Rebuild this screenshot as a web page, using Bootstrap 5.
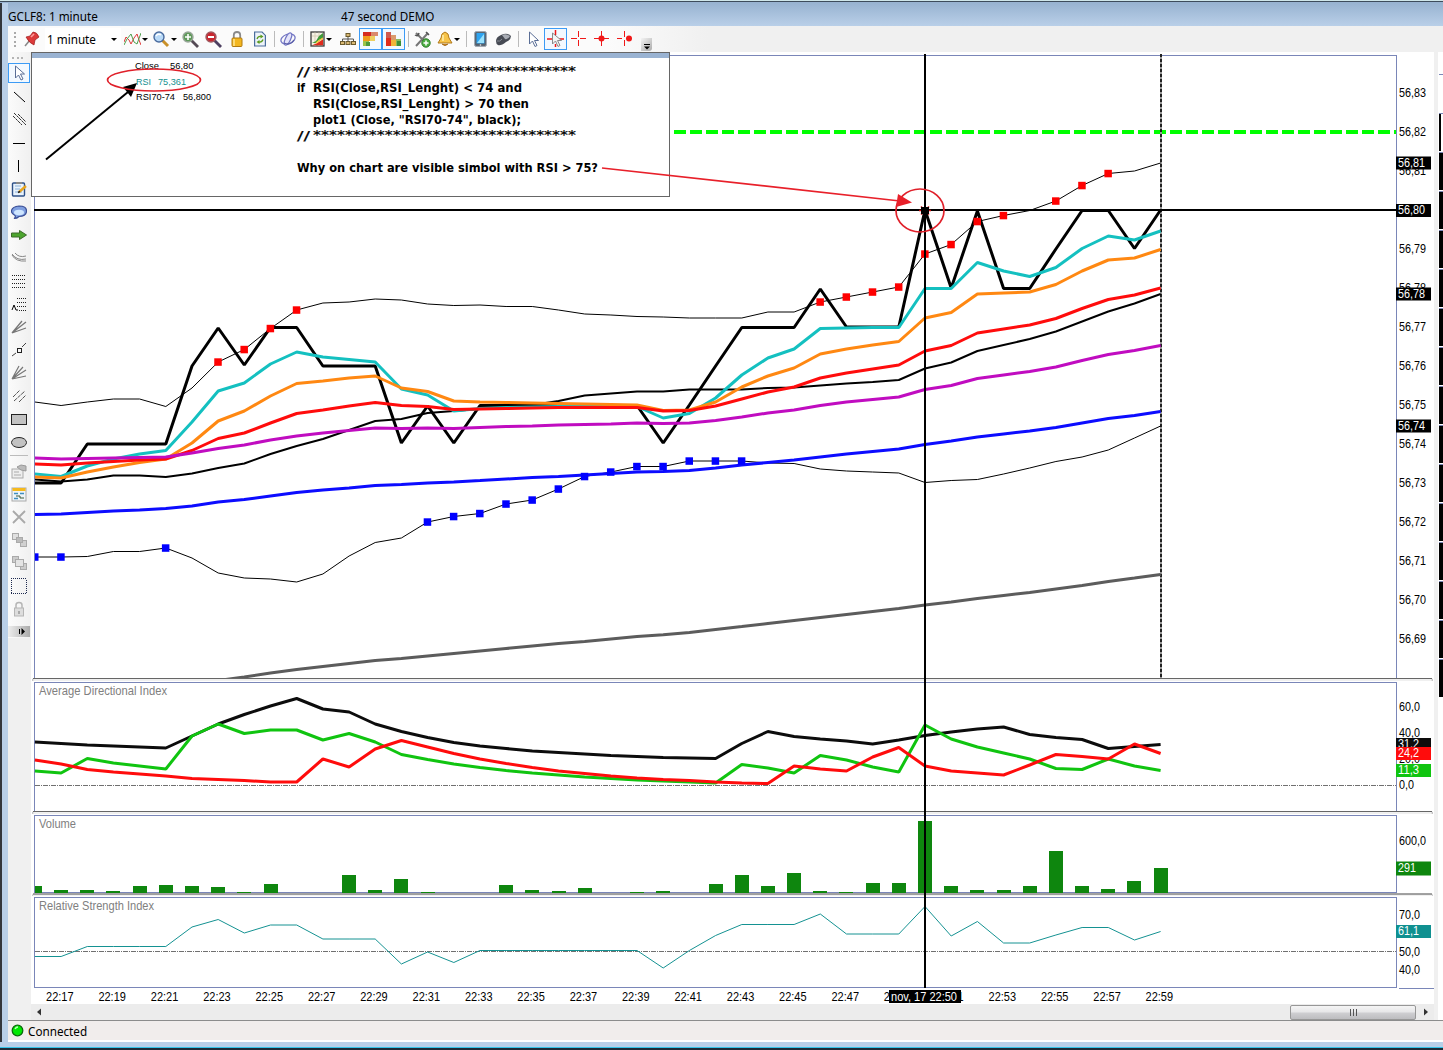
<!DOCTYPE html>
<html lang="en">
<head>
<meta charset="utf-8">
<title>GCLF8: 1 minute</title>
<link href="https://cdn.jsdelivr.net/npm/bootstrap@5.3.0/dist/css/bootstrap.min.css" rel="stylesheet">
<style>
html,body{height:100%;overflow:hidden}
body{font:12px/16px "Noto Sans","Open Sans",sans-serif;color:#000;width:1443px;height:1050px;background:#b9cfe8}
svg{display:block;flex:none}
.topedge{height:3px;flex:none;background:linear-gradient(#cfe6ea 0 1px,#3d4c5c 1px 2px,#98b3d1 2px)}
.frame-l{width:8px;flex:none;background:linear-gradient(90deg,#33363c 0 2px,#b9cfe8 2px)}
.titlebar{height:23px;flex:none;background:linear-gradient(#98b3d1,#b9cfe8);font-size:11.7px;line-height:26px}
.titlebar .t1{width:333px}
.toolbar1{height:26px;flex:none;background:linear-gradient(90deg,#fbfbfb 0 600px,#f0f0f0 700px)}
.grip-h{width:8px;height:15px;margin-left:4px;background:repeating-linear-gradient(#aaa 0 2px,transparent 2px 4.4px) 2px 0/2px 100% no-repeat}
.combo{width:76px;height:22px;background:#fff;margin-left:2px;padding-left:2px;font-size:11.7px;line-height:21px}
.ib{width:23px;height:22px;flex:none;display:flex;align-items:center;justify-content:center}
.idd{width:29px;height:22px;flex:none;display:flex;align-items:center;padding-left:3px}
.idd.wide{width:30px;padding-left:4px}
.on{border:1px solid #3c9bf5;background:#f3f9ff}
.idd::after,.combo::after{content:"";border:3px solid transparent;border-top:3px solid #000;border-bottom:0;margin-left:1px}
.sp{width:6px;height:16px;flex:none;background:linear-gradient(#bbb,#bbb) 3px 0/1px 100% no-repeat}
.ovf{width:11px;height:13px;margin:10px 0 0 5px;background:linear-gradient(135deg,#f4f4f4,#aaa);border-radius:0 0 3px 0}
.side{width:23px;flex:none;background:#f0f0f0}
.sideinner{height:586px;background:linear-gradient(90deg,#fbfbfb,#f0f0f0)}
.grip-v{height:10px;background:repeating-linear-gradient(90deg,#b5b5b5 0 2px,transparent 2px 4.5px) 4px 5px/11px 2px no-repeat}
.sideinner .ib{width:22px;height:23px}
.sideinner .on{height:20px;margin:1px 0 2px}
.hsep{height:6px;background:linear-gradient(#bbb,#bbb) 2px 2px/18px 1px no-repeat}
.charts{width:1403px;background:#fff;flex:none;position:relative}
.cross,.note{position:absolute;left:0;top:0}
.charts svg{font-family:"Liberation Sans",sans-serif}
svg.axis{font-size:12.4px}
.note .code{font:bold 12.3px "DejaVu Sans",sans-serif}
.note .stars{font-weight:normal;stroke:#000;stroke-width:.2px}
.sbar{height:16px;background:#ececec;padding:0 4px}
.thumb{width:126px;height:15px;margin-right:6px;border:1px solid #979797;border-radius:2px;background:linear-gradient(#f5f5f5 0,#e6e6e8 48%,#cfcfd2 52%,#bdbdc0)}
.statusbar{height:22px;flex:none;border-top:1px solid #8c8c8c;background:linear-gradient(#f1edec 0 19px,#fff 19px);padding-left:3px;font-size:11.7px}
.bottomedge{height:8px;flex:none;background:linear-gradient(#b9cfe8 0 5px,#35c3e8 5px 6px,#1f2a36 6px)}
.fr{fill:none;stroke:#7a86b8;shape-rendering:crispEdges}
.crisp{shape-rendering:crispEdges}
</style>
<script src="https://cdn.jsdelivr.net/npm/bootstrap@5.3.0/dist/js/bootstrap.bundle.min.js"></script>
</head>
<body class="d-flex flex-column m-0">
<div class="topedge"></div>
<div class="d-flex flex-grow-1" style="min-height:0">
<div class="frame-l"></div>
<div class="d-flex flex-column flex-grow-1">
<header class="titlebar d-flex"><span class="t1">GCLF8: 1 minute</span><span>47 second DEMO</span></header>
<nav class="toolbar1 d-flex align-items-center">
 <span class="grip-h"></span>
 <span class="ib"><svg width="16" height="16"><path d="M1 15l5-6" stroke="#888" stroke-width="1.5"/><path d="M2 6l4-1 3-4q4 0 6 5l-4 3-1 5q-5-2-8-8z" fill="#dc3a3a" stroke="#9c1c1c" stroke-width=".7"/><path d="M7 6l3-3" stroke="#ff9a9a" stroke-width="1.6"/></svg></span>
 <span class="combo d-flex align-items-center justify-content-between pe-1">1 minute</span>
 <span class="idd"><svg width="17" height="16"><path d="M0 11l2-5 3 3 2 4 3-6 3-4 2 6 2 5" fill="none" stroke="#e03a3a"/><path d="M0 14l3-6 4-5 3 8 3 2 4-11" fill="none" stroke="#4da04d"/></svg></span>
 <span class="idd"><svg width="17" height="17"><path d="M9 9l6 6" stroke="#c9912a" stroke-width="3"/><circle cx="6" cy="6" r="5" fill="#b9daf8" stroke="#4a6b9e" stroke-width="1.400"/><path d="M3 5q2-3 5-1" stroke="#fff" stroke-width="1.500" fill="none"/></svg></span>
 <span class="ib"><svg width="17" height="17"><path d="M9 9l7 7" stroke="#554a55" stroke-width="2.800"/><circle cx="6" cy="6" r="5" fill="#5f9a5a" stroke="#9aa79a" stroke-width="1.400"/><path d="M3 6h6M6 3v6" stroke="#fff" stroke-width="1.600"/></svg></span>
 <span class="ib"><svg width="17" height="17"><path d="M9 9l7 7" stroke="#4d3f60" stroke-width="2.800"/><circle cx="6" cy="6" r="5" fill="#c9262f" stroke="#a05a60" stroke-width="1.400"/><path d="M3 6h6" stroke="#fff" stroke-width="2"/></svg></span>
 <span class="ib"><svg width="12" height="16"><path d="M2.800 8V4q0-3 3.200-3t3.200 3v4" fill="none" stroke="#8a8a8a" stroke-width="1.800"/><rect x="1" y="7" width="10" height="8.500" rx="1" fill="#f3b61f" stroke="#b07a10"/><path d="M3 8v7" stroke="#ffe48a" stroke-width="1.600"/></svg></span>
 <span class="ib"><svg width="12" height="16"><path d="M.6 1h7.500l3.300 3.400V15H.6z" fill="#eef3fa" stroke="#4a6d9c" stroke-width="1.200"/><path d="M3 8q1-3 4-2.500M9 8.500q-1 3-4 2.500" stroke="#5a9b1e" stroke-width="1.300" fill="none"/><path d="M6.500 3.500l3 2-3 2zM5.500 9l-3 2 3 2z" fill="#5a9b1e"/></svg></span>
 <span class="sp"></span>
 <span class="ib"><svg width="17" height="16" fill="none" stroke="#7376c4" stroke-width="1.300"><ellipse cx="8" cy="8" rx="7.300" ry="4.800" transform="rotate(-20 8 8)"/><ellipse cx="8" cy="8" rx="2.600" ry="6.600" transform="rotate(25 8 8)" fill="#e4e4fa"/><path d="M4 12q6 3 10-3" stroke="#5a5ea8"/></svg></span>
 <span class="sp"></span>
 <span class="idd wide"><svg width="15" height="16"><rect x="1" y="1" width="13" height="14" fill="#f6f2e6" stroke="#3a3a3a" stroke-width="1.300"/><path d="M5 1.500v13M9 1.500v13M2 5h11" stroke="#d8d0b8"/><path d="M2 12l4-2 3-5 4-3v5l-4 2-3 3H2z" fill="#3f9a3a"/><path d="M2 14.300l5-2 6-4v6z" fill="#e02a1c"/><path d="M6 12l4-3 3-2" stroke="#f4c531" stroke-width="1.300" fill="none"/></svg></span>
 <span class="ib"><svg width="16" height="14" fill="#d9b873" stroke="#6b5a2c"><path d="M8 4v3M2.500 10V7h11v3M8 7v3" fill="none" stroke="#555"/><rect x="6" y="1.500" width="4" height="3"/><rect x=".5" y="9.500" width="4" height="3"/><rect x="6" y="9.500" width="4" height="3"/><rect x="11.500" y="9.500" width="4" height="3"/></svg></span>
 <span class="ib on"><svg width="17" height="16"><path d="M1 1h8v4H1z" fill="#d62b1f"/><path d="M9 1h7v4H9z" fill="#d98a6c"/><path d="M1 5h7v5H1z" fill="#f09a1c"/><path d="M8 5h5v5H8z" fill="#edd060"/><path d="M1 10h6v5H1z" fill="#9cc44a"/><path d="M4 11h4v4H4z" fill="#4d9a3d"/></svg></span>
 <span class="ib on"><svg width="17" height="16"><path d="M1 1h5v14H1z" fill="#cf5a4e"/><path d="M1 7h5v8H1z" fill="#e22e1d"/><path d="M6 4h5v11H6z" fill="#f0b53a"/><path d="M6 4h5v5H6z" fill="#d99a6e"/><path d="M11 8h5v7h-5z" fill="#8cba5a"/><path d="M12 10h4v5h-4z" fill="#3d8f3a"/></svg></span>
 <span class="sp"></span>
 <span class="ib"><svg width="17" height="17"><path d="M2 15L14 2M2 2l9 9" stroke="#777" stroke-width="2"/><path d="M1 4q3 2 4-2M12 1l3 3" stroke="#555" stroke-width="1.500" fill="none"/><circle cx="12" cy="12" r="4.200" fill="#4caf42" stroke="#2d7d2a"/><path d="M9.500 12h5M12 9.500v5" stroke="#fff" stroke-width="1.500"/></svg></span>
 <span class="idd"><svg width="16" height="16"><path d="M8 1q4 1 4 6l3 5H1l3-5q0-5 4-6z" fill="#f7c44a" stroke="#b27a1c"/><path d="M6 4v6" stroke="#fff0b0" stroke-width="1.500"/><path d="M5 13q3 3 6 0" fill="#d08a1a" stroke="#a0651a"/></svg></span>
 <span class="sp"></span>
 <span class="ib"><svg width="13" height="16"><rect x=".6" y=".6" width="11.800" height="14.800" rx="1.500" fill="#56606c" stroke="#a3abb3"/><rect x="2.500" y="2" width="8" height="10.500" fill="#2fa4f0"/><path d="M3 12l7-9v9z" fill="#9be2fc"/><circle cx="6.500" cy="14" r=".8" fill="#eee"/></svg></span>
 <span class="ib"><svg width="17" height="14"><path d="M1 9q0-4 5-6 6-3 10 1 0 4-5 6-5 4-8 3-2-1-2-4z" fill="#474b54"/><path d="M7 3q4-2 8 1-2 4-5 3z" fill="#a9adb5"/><path d="M2 9q3 1 5-2" stroke="#888d96" fill="none"/></svg></span>
 <span class="sp"></span>
 <span class="ib"><svg width="12" height="17"><path d="M2.500 1v12l3-3 2.500 5.500 2-1L7.500 9.500h4z" fill="#fff" stroke="#5a6e96"/></svg></span>
 <span class="ib on"><svg width="17" height="18"><path d="M0 9h5M12 9h5M8.500 0v5M8.500 14v3" stroke="#f01818" stroke-width="1.500"/><path d="M5.500 3v11l3-3 2.500 5.500 2-1-2.500-5h4z" fill="#f4f4f4" stroke="#8a8a8a"/></svg></span>
 <span class="ib"><svg width="16" height="16" class="crisp"><path d="M0 7.500h6M9 7.500h6M7.500 0v6M7.500 9v6" stroke="#f01818"/></svg></span>
 <span class="ib"><svg width="16" height="16"><path d="M0 7.500h15M7.500 0v15" stroke="#f01818"/><circle cx="7.500" cy="7.500" r="3" fill="#f01818"/></svg></span>
 <span class="ib"><svg width="16" height="16"><path d="M0 7.500h5M7.500 0v6M7.500 9v6M9 7.500h3" stroke="#f01818"/><circle cx="12" cy="7.500" r="3" fill="#f01818"/></svg></span>
 <span class="ovf"><svg width="11" height="13"><path d="M3 6.500h6" stroke="#000"/><path d="M3 8.500h6l-3 3z"/></svg></span>
</nav>
<div class="d-flex" style="height:968px">
<aside class="side"><div class="sideinner" id="side"></div></aside>
<main class="charts d-flex flex-column">
 <svg id="p1" class="axis" width="1403" height="629" viewBox="31 52 1403 629"></svg>
 <svg id="p2" class="axis" width="1403" height="133" viewBox="31 681 1403 133"></svg>
 <svg id="p3" class="axis" width="1403" height="82" viewBox="31 814 1403 82"></svg>
 <svg id="p4" class="axis" width="1403" height="108" viewBox="31 896 1403 108"></svg>
 <div class="sbar d-flex align-items-center"><svg width="8" height="10"><path d="M6 1.500v7L2 5z" fill="#333"/></svg><span class="thumb ms-auto d-flex align-items-center justify-content-center"><svg width="9" height="7"><path d="M1.500 0v7M4.500 0v7M7.500 0v7" stroke="#555"/></svg></span><svg width="8" height="10"><path d="M2 1.500v7L6 5z" fill="#333"/></svg></div>
 <svg class="note" width="1403" height="200" viewBox="31 52 1403 200">
  <rect x="31.500" y="52.500" width="638" height="144" fill="#fff" stroke="#666"/><path d="M32 55.500h637" stroke="#9ab3d2" stroke-width="5"/>
  <g font-size="9.800" id="legend"></g>
  <path d="M46 159.500L128 92" stroke="#000" stroke-width="2"/><path d="M137 83l-6 14-8-10z"/>
  <ellipse cx="154" cy="80" rx="46.500" ry="11" fill="none" stroke="#e0202a" stroke-width="1.700"/>
  <g class="code" id="code"></g>
 </svg>
 <svg class="cross axis" width="1403" height="952" viewBox="31 52 1403 952" id="cross"></svg>
</main>
<svg width="9" height="968" viewBox="1434 52 9 968" class="crisp" id="edge"></svg>
</div>
<footer class="statusbar d-flex align-items-center"><svg width="13" height="13" style="margin-right:4px;margin-top:-3px"><circle cx="6.500" cy="6.500" r="5.300" fill="#00e800" stroke="#0a6b0a" stroke-width="1.300"/><path d="M4 5q1-2 3-2" stroke="#baffba" stroke-width="1.300" fill="none"/></svg><span style="margin-top:-2px">Connected</span></footer>
</div>
</div>
<div class="bottomedge"></div>
<script>
// drawing tools of the left palette
const ic={
 cur:'<path d="M4.500 1v12l3-3 2.500 5 2-1-2.500-5h4z" fill="#fff" stroke="#5a6e96"/>',
 l1:'<path d="M3 3l11 10" stroke="#000"/>',
 l2:'<path d="M2 4l9 9M7 2l8 8M3 1l12 12" stroke="#333" stroke-dasharray="3 .6"/>',
 h:'<path d="M2 8.500h12" stroke="#000"/>', v:'<path d="M7.500 2v12" stroke="#000"/>',
 note:'<rect x="1.500" y="2" width="12" height="13" rx="1" fill="#e8f2fc" stroke="#2f5288" stroke-width="1.400"/><path d="M4 5h6M4 8h5M4 11h7" stroke="#8ab0d8"/><path d="M5 1h6v2H5z" fill="#888"/><path d="M8 11l7-6" stroke="#e8a41c" stroke-width="2.400"/><path d="M7 11.500l2-1" stroke="#222" stroke-width="1.500"/>',
 bub:'<path d="M8 2q7.500 0 7.500 5T8 12.500q-2 2-5 2 2-1 1-3-4-2-3.500-5 1-4 7.500-4.500z" fill="#7f9fe0" stroke="#3b4f96" stroke-width="1.200"/><ellipse cx="8" cy="8.500" rx="5" ry="2.800" fill="#cfe6ff"/>',
 arr:'<path d="M.5 6h8V3.500l7 4.500-7 4.500V10h-8z" fill="#4ca52e" stroke="#3c6b2a"/>',
 arc:'<path d="M1 4q5 7 14 5M4 3q4 5 11 3M1 5q4 7 14 6" fill="none" stroke="#888"/>',
 dots:'<path d="M1 2.500h14M1 6.500h14M1 10.500h14M1 14.500h14" stroke="#222" stroke-dasharray="1 1"/>',
 dots2:'<path d="M6 2.500h9M6 6.500h9M6 10.500h9M8 14.500h7" stroke="#222" stroke-dasharray="1 1"/><path d="M1 14l2-5 2 5h2" fill="none" stroke="#000"/>',
 fan:'<path d="M1 14L11 2M1 14L15 3M1 14l14-5" stroke="#777" stroke-width="1.300"/>',
 seg:'<rect x="6.500" y="6.500" width="4" height="4" fill="none" stroke="#222"/><path d="M1 14l4-3M11 5l4-4" stroke="#444"/>',
 fan2:'<path d="M1 14L8 1M1 14L12 2M1 14L15 5M1 14l14-3" stroke="#777" stroke-width="1.200"/>',
 par:'<path d="M2 9l7-7M3 13L14 3M8 14l7-7" stroke="#555" stroke-dasharray="4 .8"/>',
 rect:'<rect x=".5" y="3.500" width="15" height="10" fill="#c2c2c2" stroke="#222"/>',
 ell:'<ellipse cx="8" cy="8.500" rx="7.500" ry="5" fill="#c2c2c2" stroke="#222"/>',
 prop:'<rect x="1" y="6" width="11" height="9" fill="#eee" stroke="#aaa"/><path d="M3 9h5M3 12h7" stroke="#aaa"/><path d="M6 4l4-2 5 1v5l-5-1z" fill="#bbb" stroke="#999"/>',
 form:'<rect x="1" y="2" width="14" height="13" fill="#eef4f8" stroke="#aaa"/><path d="M1.500 3.500h13" stroke="#f6b91c" stroke-width="3"/><path d="M3 7.500h4M9 7.500h4M3 12.500h4" stroke="#3f8fc0" stroke-width="1.500"/><path d="M5 10h4v2h4" stroke="#3a5a38" fill="none"/>',
 x:'<path d="M2 2l12 12M14 2L2 14" stroke="#a9a9a9" stroke-width="1.800"/>',
 st1:'<g stroke="#aaa"><rect x="1.500" y="1.500" width="6" height="6" fill="#e0e0e0"/><rect x="9.500" y="8.500" width="6" height="6" fill="#d0d0d0"/><rect x="5.500" y="5.500" width="6" height="5" fill="#bbb"/></g>',
 st2:'<g stroke="#aaa"><rect x="1.500" y="1.500" width="6" height="6" fill="#ccc"/><rect x="9.500" y="8.500" width="6" height="6" fill="#ccc"/><rect x="4.500" y="4.500" width="8" height="7" fill="#e4e4e4"/></g>',
 sel:'<path class="crisp" d="M0 .5h16M0 15.500h16M.5 2v13M15.500 2v13" fill="none" stroke="#1e2a50" stroke-dasharray="1 1"/>',
 lock:'<path d="M5 8V4q0-2.500 3-2.500T11 4v4" fill="none" stroke="#b5b5b5" stroke-width="1.500"/><rect x="3.500" y="7" width="9" height="8" fill="#ddd" stroke="#b5b5b5"/><path d="M8 10v3" stroke="#999" stroke-width="1.500"/>'};
const cell=(k,c='')=>`<span class="ib ${c}"><svg width="16" height="16">${ic[k]}</svg></span>`;
document.getElementById('side').innerHTML='<div class="grip-v"></div>'+cell('cur','on')+
 'l1 l2 h v note bub arr arc dots dots2 fan seg fan2 par rect ell'.split(' ').map(k=>cell(k)).join('')+'<div class="hsep"></div>'+
 'prop form x st1 st2 sel lock'.split(' ').map(k=>cell(k)).join('')+
 '<svg width="22" height="12" style="margin-top:6px"><defs><linearGradient id="og"><stop stop-color="#eee"/><stop offset="1" stop-color="#aaa"/></linearGradient></defs><path d="M0 0h22v11H0z" fill="url(#og)"/><path d="M11.500 3v5" stroke="#000"/><path d="M13.500 2v7l3.500-3.500z"/></svg>';

const X=i=>34.9+26.18*i, $=id=>document.getElementById(id);
const line=(ys,c,w,s=0)=>`<polyline fill="none" stroke="${c}" stroke-width="${w}" stroke-linejoin="bevel" points="${ys.map((y,i)=>X(i+s).toFixed(1)+','+y).join(' ')}"/>`;
const T=(x,y,t,w,f='#000',a='')=>`<text x="${x}" y="${y}" textLength="${w}" lengthAdjust="spacingAndGlyphs" fill="${f}" ${a}>${t}</text>`;
const tag=(y,t,c,w=27,h=13)=>`<path fill="${c}" d="M1396 ${y-h/2}h35v${h}h-35z"/>`+T(1398,Math.floor(y+4),t,w,'#fff');
const split=y=>`<rect x="32.500" y="${y}" width="1400" height="3" rx="1.500" fill="#f0f0f0" stroke="#bbb"/><path d="M33 ${y}h1399" stroke="#666"/>`;
const sq=(list,ys,c)=>list.map(i=>`<rect x="${X(i)-3.9}" y="${ys[i]-3.7}" width="7.500" height="7.500" fill="${c}"/>`).join('');
const close=[483,483,444,444,444,444,366,328,365,327.5,327.5,366,366,366,443,406,443,405.5,405.5,405.5,405.5,405.5,405.5,405.5,443,405,366,327.5,327.5,327.5,289,327,327,327,210,288,211,288.5,288.5,249,210.5,210.5,248.5,210];
const up=[402,405.5,402,399,399,406.5,388,362,349.5,328.5,310,303,302,299,300,304,305.5,305,306.5,306.5,310,314,315,316.5,317,318,318,318,312,312,302,297,292,287,254,244.5,221.5,215.5,210.5,201,185.5,173.5,171,163];
const lo=[557,557,556.5,551.5,551.5,548,558,573,578,579,582,574,556,542.5,538,522,516.5,513.5,504,500,489,476.5,472,466.5,466.5,461,461,461,463,463.5,469,471,472,473,482.5,480.5,479.5,474,468,461.5,457,450,438,426];
const mid=[479.5,481.5,479.5,475.5,475.5,477,473.5,468,463.5,454,446,439,430,421,419,413,411,409,407.5,405,401,395.5,393.5,391.5,391.5,389.5,389.5,389.5,388,387.5,385.5,383.5,382,380,368.5,362.5,351,345,339,331.5,321.5,311.5,303.5,294];
const cy=[474,476.5,466,459,454,450.5,422,391,383,364,352,357,359.5,362,389,395,411,408.5,407.5,407,406.5,406.5,406.5,406.5,418,413.5,398,375,358,349,328.5,328,327.5,327.5,288.5,288.5,262.5,271,276.5,267.5,248.5,236,240,231];
const or=[477,478,472,467,462.5,459,443,421,411,396,383.5,381,378,376,388,391.5,401,402,402.5,403,403.5,404,404.5,405,410.5,410,402,387,376,368,354,349,345,341.5,318,312.5,294,293,292,284.5,271,260,258,249.5];
const rd=[464,465,463,461.5,460,459,450.5,438.5,433,423,413.5,410,406,402.5,405.5,406.5,409.5,409,408.5,408,407.5,407.5,407.5,407.5,411,410.5,406,399,392,387,378,373,369,365,351,345.5,333,329,325,318.5,308.5,299.5,295,288];
const mg=[458,459,458.5,458,457.5,457,453,448.5,445,440,436,433,430.5,428,428.5,428,428.5,427.5,426.5,426,425,424.5,424,423,423.5,423,420.5,417,413,410,405.5,402,399.5,397,389.5,385.5,378.5,375,371.5,367,360.5,354.5,350.5,345.5];
const bl=[514.5,514,512.5,511,510,508.5,506,502,499.5,496,492.5,490,488,485.5,484.5,483,482,480.5,479,477.5,476.5,475,473.5,472,471.5,470.5,468,465,462.5,460,457,454,451.5,449,444.5,441,437,434,431,427.5,423,418.5,415.5,411.5];
const gr=[680.5,677,673,669.5,666.5,663.5,660.5,658.5,656,653.5,651,648.5,646,643.5,641.5,639,636.5,634.8,632.5,629.5,626.5,623.5,620.5,617.5,614.5,611.5,608.5,605,602,598.5,595.5,592.5,589,585.5,581.5,578,574.5];
let s='<rect class="fr" x="34.5" y="55.5" width="1362" height="640"/>';
s+='<path d="M674 132H1396" stroke="#00ff00" stroke-width="4" stroke-dasharray="12 4"/>';
s+='<path class="crisp" d="M1161 54V678" stroke="#999" stroke-width="2"/><path class="crisp" d="M1161 54V678" stroke="#222" stroke-width="2" stroke-dasharray="3 2"/>';
s+='<clipPath id="c1"><path d="M35 55h1361v623H35z"/></clipPath><g clip-path="url(#c1)">';
s+=line(close,'#000',3)+line(up,'#000',1)+line(lo,'#000',1)+line(mid,'#000',2)+line(cy,'#14c0c0',3)+line(or,'#ff8812',3)+line(rd,'#ff0c0c',3)+line(mg,'#c00cc0',3)+line(bl,'#0c0cff',3)+line(gr,'#5c5c5c',3,7);
s+=sq([7,8,9,10,30,31,32,33,34,35,36,37,39,40,41],up,'#f00')+sq([0,1,5,15,16,17,18,19,20,21,22,23,24,25,26,27],lo,'#00f')+'</g>';
for(let k=0;k<15;k++)if(k!=3)s+=T(1399,97+39*k,'56,'+(83-k),27);
s+=tag(163,'56,81','#000')+tag(210.5,'56,80','#000')+tag(294,'56,78','#000')+tag(426,'56,74','#000');
s+='<path d="M31 678h1403v3H31z" fill="#fff"/>'+split(678.5);
$('p1').innerHTML=s;

const ab=[742,743.5,745,746,747,748,736,724,714.5,706,698.5,709,712,724,731.5,737.5,742.5,746,748.5,751,752.5,754,755.5,756.5,757.5,758,758.5,743.5,731.5,736.5,739,741,744,740,735.5,732,729,727,734.5,737.5,739.5,748.5,746.5,744.5];
const ag=[771,773,758.5,763,766,769,736,724,733.5,730,730,740,733.5,742,754.5,759.5,764,767.5,770.5,773,775,777,778.5,780,781,782,783,764.5,768,773,755.5,760,767,772,725,739,747,753,759,768.5,769.5,759,766,770.5];
const ar=[760,764,769.5,772,774,776,778.5,779.5,780.5,782,782,759,767,749,740.5,747,753.5,759,763.5,767.5,771,773.5,776,778,779.5,780.5,782,783,783.5,766,769,771,757,747.5,766,771,773,775,765,754.5,756.5,759,744,753.5];
const dd=y=>`<path d="M35 ${y}H1396" stroke="#707070" stroke-dasharray="5 1 1 1"/>`;
s='<rect class="fr" x="34.5" y="682.5" width="1362" height="140"/>'+dd(785.5)+line(ab,'#0c0c0c',3)+line(ag,'#10c410',3)+line(ar,'#ff0c0c',3);
s+=T(39,695,'Average Directional Index',128,'#808080');
s+=T(1399,711,'60,0',21)+T(1399,737,'40,0',21)+T(1399,763,'20,0',21)+T(1399,789,'0,0',15)+tag(744.5,'31,2','#0c0c0c',21)+tag(753.5,'24,2','#ff0c0c',21)+tag(770.5,'11,3','#10c410',21);
s+='<path d="M31 811h1403v3H31z" fill="#fff"/>'+split(811.5);
$('p2').innerHTML=s;

const vo=[886,890,890,891,886,885,886,887,892,884,0,0,875,890,879,892,0,0,885,890,891,888,0,892,891,0,884,875,886,873,891,892,883,883,821,886,890,890,886,851,886,889,881,868];
s='<rect class="fr" x="34.5" y="815.5" width="1362" height="77"/>'+T(39,828,'Volume',37,'#808080')+T(1399,845,'600,0',27)+tag(868.5,'291','#0e860e',18,14)+split(894)+'<g class="crisp" fill="#0e860e">';
vo.forEach((y,i)=>{if(y){let x=Math.max(35,Math.round(X(i)-7));s+=`<rect x="${x}" y="${y}" width="${Math.round(X(i)+7)-x}" height="${893-y}"/>`}});
s+='</g>';
$('p3').innerHTML=s;

const rs=[956.5,956.5,946.5,946.5,946.5,946.5,927,919.5,933,925,925,939,939,939,964,952,962.5,950.5,950.5,950.5,950.5,950.5,950.5,950.5,968,950.5,935.5,924.5,924.5,924.5,914,934,934,934,906.5,936,921.5,943,943,935,927.5,927.5,940,931.5];
s='<rect class="fr" x="34.5" y="897.5" width="1362" height="90"/><path d="M1399 988.5h35" stroke="#7a86b8"/>'+dd(951.5)+line(rs,'#149292',1);
s+=T(39,910,'Relative Strength Index',115,'#808080')+T(1399,919,'70,0',21)+T(1399,956,'50,0',21)+T(1399,974,'40,0',21)+tag(931.5,'61,1','#109090',21);
for(let i=1;i<44;i+=2)s+=T((X(i)-15).toFixed(1),1001,'22:'+(16+i),27.5);
$('p4').innerHTML=s;

$('cross').innerHTML='<g class="crisp"><path d="M34 210h1362M925 54v934" stroke="#000" stroke-width="2"/><path d="M889 990h72V1003h-72z"/></g>'+
 T(891,1001,'nov, 17 22:50',66,'#fff')+
 '<path d="M919 210.500h12M921 206.500l8 8M929 206.500l-8 8" stroke="#d01010" stroke-width="1.500"/><path d="M921 207h8v7h-8z"/>'+
 '<ellipse cx="920" cy="210.500" rx="24" ry="21.500" fill="none" stroke="#e0202a" stroke-width="1.700"/><path d="M602 168L900 201" stroke="#e8202a" stroke-width="1.700"/><path d="M912 202.500l-16 4.500 2-13z" fill="#e8202a"/>';

$('legend').innerHTML=T(135,69,'Close',24)+T(170,69,'56,80',23.5)+T(136,85,'RSI',15,'#129090')+T(158,85,'75,361',28,'#129090')+T(136,100,'RSI70-74',39)+T(183,100,'56,800',28);
const st='*'.repeat(33), n='class="stars"';
$('code').innerHTML=T(297,76,'//',13,'#000',n)+T(313,75,st,263,'#000',n)+
 T(297,92,'if',8)+T(313,92,'RSI(Close,RSI_Lenght) &lt; 74 and',209)+T(313,108,'RSI(Close,RSI_Lenght) &gt; 70 then',216)+T(313,124,'plot1 (Close, "RSI70-74", black);',208)+
 T(297,140,'//',13,'#000',n)+T(313,139,st,263,'#000',n)+
 T(297,172,'Why on chart are visible simbol with RSI &gt; 75?',301);

s='<path fill="#f0f0f0" d="M1434 52h4v969h-4z"/><path fill="#fff" d="M1438 52h5v969h-5z"/><path d="M1439 74.5h4M1439 113.5h4" stroke="#7a86b8"/><path d="M1439 114h2v37h-2z"/>';
for(let k=0;k<14;k++){let y=152+39*k;s+=`<path d="M1439 ${y+1}h4v37h-4z"/><path d="M1439 ${y+.5}h4" stroke="#7a86b8"/>`}
$('edge').innerHTML=s;
</script>
</body>
</html>
